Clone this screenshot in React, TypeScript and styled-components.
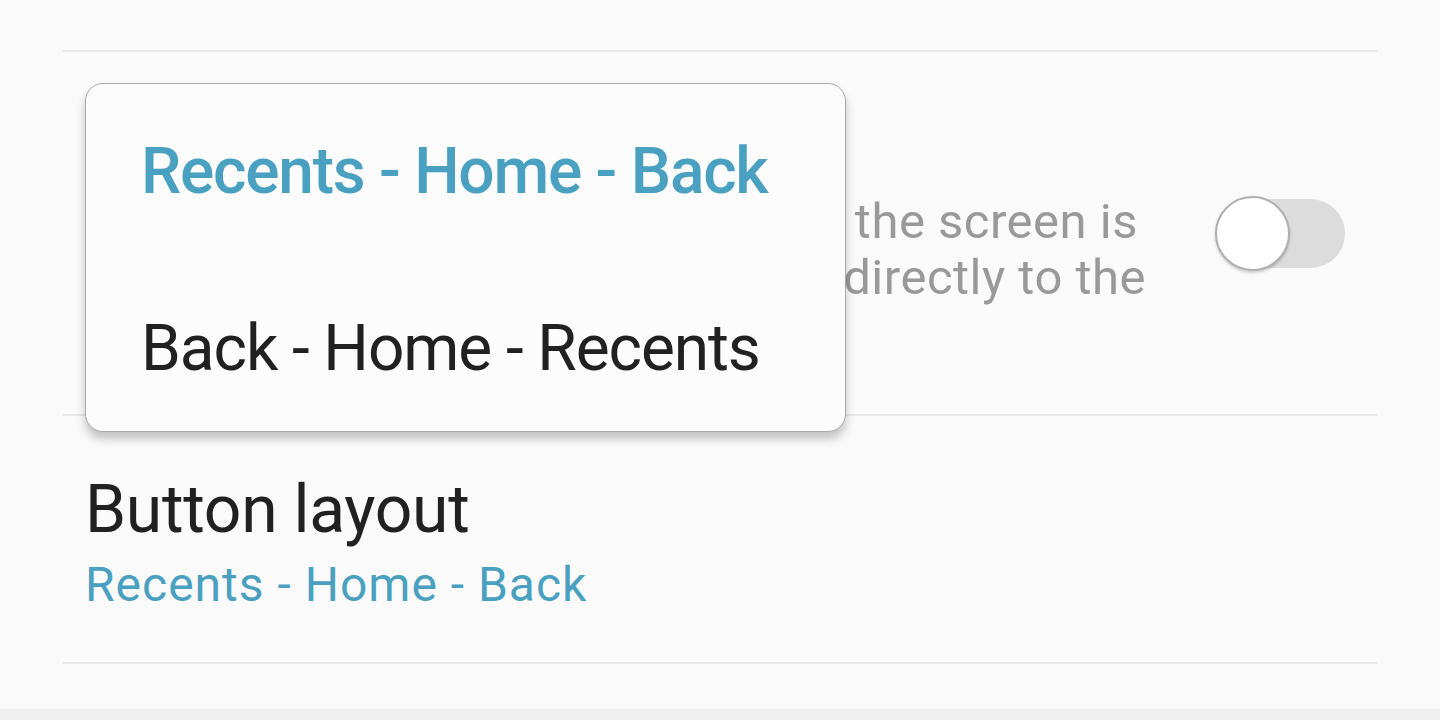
import React from "react";
import styled, { createGlobalStyle } from "styled-components";

const Global = createGlobalStyle`
  html, body { margin: 0; padding: 0; background: #fafafa; }
  body { font-family: Roboto, "Noto Sans", "Liberation Sans", sans-serif; }
  * { box-sizing: border-box; }
`;

const Screen = styled.div`
  position: relative;
  width: 1440px;
  height: 720px;
  overflow: hidden;
  background: #fafafa;
  display: flex;
  flex-direction: column;
`;

const List = styled.div`
  flex: 1;
  display: flex;
  flex-direction: column;
  padding: 50px 63px 0 63px;
`;

const Divider = styled.div`
  height: 2px;
  background: #e8e8e8;
`;

const SettingRow = styled.div<{ $h: number }>`
  height: ${(p) => p.$h}px;
  display: flex;
  align-items: center;
  padding: 0 32px 0 22px;
`;

const TextCol = styled.div<{ $pt: number }>`
  flex: 1;
  align-self: flex-start;
  display: flex;
  flex-direction: column;
  min-width: 0;
  padding-top: ${(p) => p.$pt}px;
`;

const Title = styled.div`
  font-size: 66px;
  line-height: 80px;
  letter-spacing: -0.3px;
  color: #212121;
  white-space: nowrap;
`;

const Summary = styled.div`
  margin-top: 6px;
  font-size: 48px;
  line-height: 58px;
  letter-spacing: 1px;
  color: #4aa0c0;
  white-space: nowrap;
`;

const Desc = styled.div`
  width: 1061px;
  display: flex;
  flex-direction: column;
  font-size: 49px;
  line-height: 56px;
  letter-spacing: 0.5px;
  color: #999999;
`;

const DescLine = styled.div<{ $trim?: number }>`
  display: flex;
  justify-content: flex-end;
  white-space: nowrap;
  padding-right: ${(p) => p.$trim ?? 0}px;
`;

const Switch = styled.div`
  position: relative;
  width: 130px;
  height: 75px;
  flex: none;
  display: flex;
  align-items: center;
  justify-content: flex-end;
`;

const Track = styled.div`
  width: 116px;
  height: 69px;
  border-radius: 35px;
  background: #dcdcdc;
`;

const Thumb = styled.div`
  position: absolute;
  left: 0;
  top: 0;
  width: 75px;
  height: 75px;
  border-radius: 50%;
  background: #ffffff;
  border: 2px solid #b0b0b0;
  box-shadow: 0 2px 3px rgba(0, 0, 0, 0.18);
`;

const BottomBand = styled.div`
  height: 11px;
  background: #f0f0f0;
  flex: none;
`;

const Popup = styled.div`
  position: absolute;
  left: 85px;
  top: 83px;
  width: 761px;
  height: 349px;
  padding-top: 50px;
  background: #fcfcfc;
  border: 1px solid #a8a8a8;
  border-radius: 18px;
  box-shadow: 0 7px 10px rgba(0, 0, 0, 0.22);
  display: flex;
  flex-direction: column;
  gap: 102px;
`;

const Option = styled.div<{ $selected?: boolean }>`
  padding-left: 55px;
  font-size: 64px;
  line-height: 75px;
  letter-spacing: ${(p) => (p.$selected ? -1.25 : -1.1)}px;
  font-weight: ${(p) => (p.$selected ? 500 : 400)};
  color: ${(p) => (p.$selected ? "#4aa0c0" : "#212121")};
  white-space: nowrap;
`;

export default function App() {
  return (
    <>
      <Global />
      <Screen>
        <List>
          <Divider />
          <SettingRow $h={362}>
            <TextCol $pt={62}>
              <Title>Unlock with Home button</Title>
              <Desc>
                <DescLine $trim={8}>Press the Home button while the screen is</DescLine>
                <DescLine>off to unlock and go directly to the</DescLine>
              </Desc>
            </TextCol>
            <Switch>
              <Track />
              <Thumb />
            </Switch>
          </SettingRow>
          <Divider />
          <SettingRow $h={246}>
            <TextCol $pt={54}>
              <Title>Button layout</Title>
              <Summary>Recents - Home - Back</Summary>
            </TextCol>
          </SettingRow>
          <Divider />
        </List>
        <BottomBand />
        <Popup>
          <Option $selected>Recents - Home - Back</Option>
          <Option>Back - Home - Recents</Option>
        </Popup>
      </Screen>
    </>
  );
}
